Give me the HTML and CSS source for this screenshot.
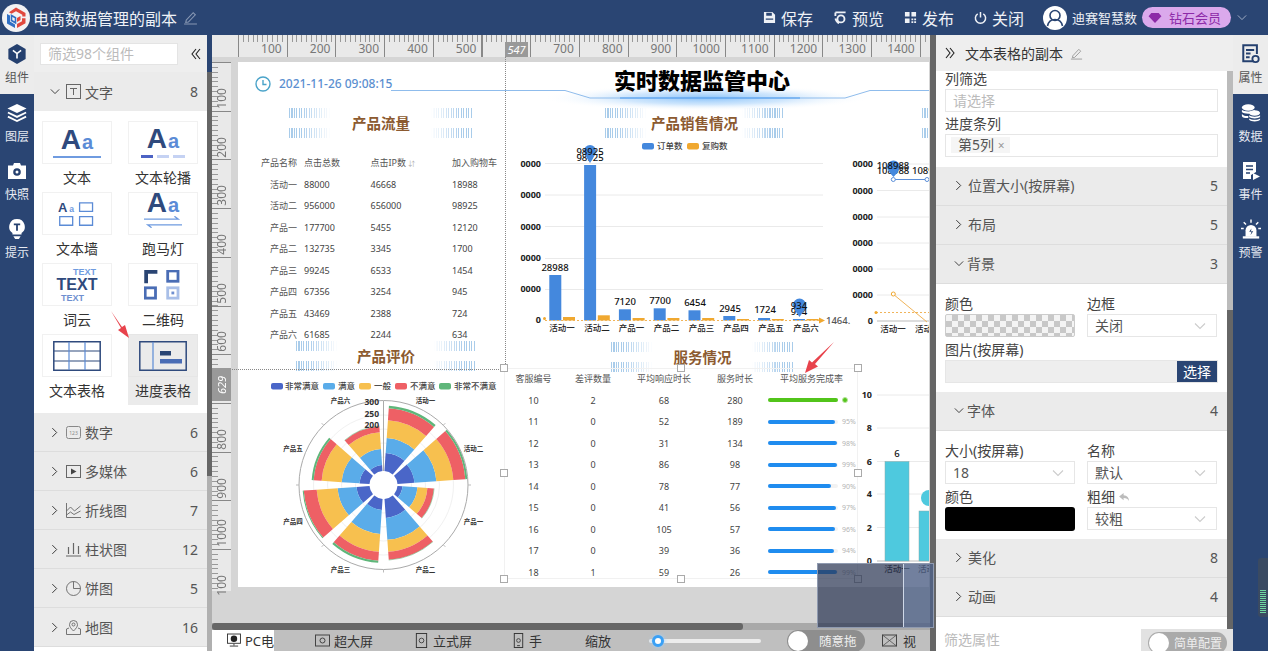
FILE: index.html
```html
<!DOCTYPE html>
<html lang="zh-CN">
<head>
<meta charset="UTF-8">
<title>电商数据管理的副本</title>
<link rel="stylesheet" href="styles.css">
</head>
<body>

<svg class="defs" width="0" height="0">
    <symbol id="right" viewBox="0 0 8 12"><polyline points="1.5,1 6.5,6 1.5,11" fill="none" stroke="currentColor" stroke-width="1.1"/></symbol>
    <symbol id="down" viewBox="0 0 12 8"><polyline points="1,1.5 6,6.5 11,1.5" fill="none" stroke="currentColor" stroke-width="1.1"/></symbol>
    <symbol id="pen" viewBox="0 0 14 14"><path d="M3 9.5 9.5 2.5l2 2L5 11.2l-2.4.4zM1 13h12" fill="none" stroke="currentColor" stroke-width="1"/></symbol>
    <symbol id="fold-l" viewBox="0 0 10 12"><path d="M5 1 1 6l4 5M9 1 5 6l4 5" fill="none" stroke="currentColor" stroke-width="1.1"/></symbol>
    <symbol id="fold-r" viewBox="0 0 10 12"><path d="M1 1l4 5-4 5M5 1l4 5-4 5" fill="none" stroke="currentColor" stroke-width="1.1"/></symbol>
</svg>

<header class="topbar">
    <svg class="logo" viewBox="0 0 28 28">
        <circle cx="14" cy="14" r="14" fill="#f2f2f4"/>
        <path d="M14 3.5 23.5 9v3.5h-3.2V10.8L14 7.2 9.5 9.8 7 8.3z" fill="#e0483e"/>
        <path d="M5 10v9.5l8 4.5v-3.6l-5-2.9v-6z" fill="#2f6fc4"/>
        <path d="M9.5 11.5l4 2.3v5l-4-2.3z" fill="none" stroke="#2f6fc4" stroke-width="1.6"/>
        <path d="M15 24l8.5-4.8v-5H20v3l-5 2.9zM15 14l3.5-2v4L15 18z" fill="#e0483e"/>
    </svg>
    <span class="app-name">电商数据管理的副本</span>
    <svg class="pen-top"><use href="#pen"/></svg>
    <div class="top-actions">
        <span class="act act-save">
            <svg viewBox="0 0 14 14"><path d="M1 1h9l3 3v9H1zM3.5 2v3h6V2zM3 8h8v1.5H3z" fill="#eef1f6" fill-rule="evenodd"/></svg>保存
        </span>
        <span class="act act-view">
            <svg viewBox="0 0 14 14"><path d="M1.5 1.5h11M1.5 1.5v4" fill="none" stroke="#eef1f6" stroke-width="2"/><circle cx="7.5" cy="8.5" r="3.8" fill="none" stroke="#eef1f6" stroke-width="2"/><path d="M1.5 8c1 3 2 4.5 4 5" fill="none" stroke="#eef1f6" stroke-width="2"/></svg>预览
        </span>
        <span class="act act-pub">
            <svg viewBox="0 0 14 14"><path d="M1 1h5v5H1zM8 1h5v5H8zM1 8h5v5H1zM8 8h2v2H8zM11 8h2v2h-2zM8 11h2v2H8zM11 11h2v2h-2z" fill="#eef1f6"/></svg>发布
        </span>
        <span class="act act-close">
            <svg viewBox="0 0 14 14"><path d="M4 3a5.5 5.5 0 1 0 6 0M7 1v6" fill="none" stroke="#eef1f6" stroke-width="1.6"/></svg>关闭
        </span>
    </div>
    <svg class="avatar" viewBox="0 0 24 24"><circle cx="12" cy="12" r="12" fill="#fff"/><circle cx="12" cy="9.5" r="5" fill="none" stroke="#2a4573" stroke-width="1.6"/><path d="M4.5 20c1-5 4-6.5 7.5-6.5s6.5 1.5 7.5 6.5" fill="none" stroke="#2a4573" stroke-width="1.6"/></svg>
    <span class="user-name">迪赛智慧数</span>
    <span class="vip">
        <svg viewBox="0 0 14 12"><path d="M3 1h8l3 3.5L7 12 0 4.5z" fill="#8d2aa8"/></svg>钻石会员
    </span>
    <svg class="top-chev"><use href="#down"/></svg>
</header>

<div class="main">
    <nav class="side-nav">
        <div class="nav-item active">
            <svg viewBox="0 0 20 22"><path d="M10 0l9.5 5.5v11L10 22 .5 16.5v-11z" fill="#25406f"/><path d="M5.5 7 10 10.5 14.5 7M10 10.5V16" fill="none" stroke="#fff" stroke-width="1.8"/></svg>
            <span>组件</span>
        </div>
        <div class="nav-item">
            <svg viewBox="0 0 22 20"><path d="M11 0l10.5 5L11 10 .5 5z" fill="#fff"/><path d="M1 9.5l10 4.8 10-4.8M1 14l10 4.8L21 14" fill="none" stroke="#fff" stroke-width="2"/></svg>
            <span>图层</span>
        </div>
        <div class="nav-item">
            <svg viewBox="0 0 20 17"><path d="M1 3h5l1-2.5h6L14 3h5v13.5H1z" fill="#fff"/><circle cx="10" cy="9.5" r="3.8" fill="#25406f"/><circle cx="10" cy="9.5" r="1.5" fill="#fff"/></svg>
            <span>快照</span>
        </div>
        <div class="nav-item">
            <svg viewBox="0 0 18 22"><path d="M9 0a8.5 8.5 0 0 1 5 15.4V17H4v-1.600A8.5 8.5 0 0 1 9 0z" fill="#fff"/><path d="M5 19h8l-2 3H7z" fill="#fff"/><path d="M5.5 6h7M9 6v7" stroke="#25406f" stroke-width="2"/></svg>
            <span>提示</span>
        </div>
    </nav>

    <aside class="comp-panel">
        <div class="comp-search">
            <div class="comp-input">筛选98个组件</div>
            <svg class="fold"><use href="#fold-l"/></svg>
        </div>
        <div class="comp-list">
            <div class="group open">
                <svg class="chev-d"><use href="#down"/></svg>
                <svg class="g-icon" viewBox="0 0 15 15"><rect x=".5" y=".5" width="14" height="14" fill="none" stroke="#666"/><path d="M4 4.5h7M7.5 4.5v6.5" stroke="#666"/></svg>
                <span class="g-name">文字</span><span class="g-count">8</span>
            </div>
            <div class="cards">
                <div class="card">
                    <div class="thumb"><div class="aa"><b>A</b><i>a</i></div><div class="rule"></div></div>
                    <span>文本</span>
                </div>
                <div class="card">
                    <div class="thumb"><div class="aa"><b>A</b><i>a</i></div><div class="dashes"><em></em><em></em><em></em></div></div>
                    <span>文本轮播</span>
                </div>
                <div class="card">
                    <div class="thumb">
                        <svg class="pic" viewBox="0 0 44 32"><text x="0" y="14" class="aa-a">A</text><text x="13" y="14" class="aa-b">a</text><path d="M25 3h15v10H25zM2 19h15v10H2zM25 19h15v10H25z" fill="none" stroke="#5b8bd6" stroke-width="1.5"/></svg>
                    </div>
                    <span>文本墙</span>
                </div>
                <div class="card">
                    <div class="thumb">
                        <div class="aa aa-high"><b>A</b><i>a</i></div>
                        <svg class="marq" viewBox="0 0 40 12"><path d="M0 3h36l-4-3M40 9H4l4 3" fill="none" stroke="#6f9be0" stroke-width="1.4"/></svg>
                    </div>
                    <span>跑马灯</span>
                </div>
                <div class="card">
                    <div class="thumb cloud"><span class="t1">TEXT</span><span class="t2">TEXT</span><span class="t3">TEXT</span></div>
                    <span>词云</span>
                </div>
                <div class="card">
                    <div class="thumb">
                        <svg class="pic" viewBox="0 0 40 32"><path d="M0 0h14v4H4v10H0z" fill="#2a4573"/><rect x="25" y="1" width="11" height="11" fill="none" stroke="#4a6db5" stroke-width="3"/><rect x="1" y="19" width="11" height="11" fill="none" stroke="#4a6db5" stroke-width="3"/><rect x="25" y="19" width="11" height="11" fill="none" stroke="#a9bfe8" stroke-width="3"/><rect x="29" y="23" width="3" height="3" fill="#6f8fd0"/></svg>
                    </div>
                    <span>二维码</span>
                </div>
                <div class="card">
                    <div class="thumb">
                        <svg class="pic wide" viewBox="0 0 48 30"><path d="M.8.8h46.4v28.4H.8z" fill="none" stroke="#2f4a7d" stroke-width="1.5"/><path d="M1 10h46M1 20h46" stroke="#2f4a7d" stroke-width="1.2"/><path d="M16 1v28M32 1v28" stroke="#5b8bd6" stroke-width="1.2"/></svg>
                    </div>
                    <span>文本表格</span>
                </div>
                <div class="card on">
                    <div class="thumb">
                        <svg class="pic wide" viewBox="0 0 48 30"><path d="M.8.8h46.4v28.4H.8z" fill="none" stroke="#2f4a7d" stroke-width="1.5"/><path d="M14 1v28" stroke="#5b8bd6" stroke-width="1.2"/><rect x="21" y="10" width="11" height="4.5" fill="#2a4573"/><rect x="21" y="18" width="22" height="4.5" fill="#4a6db5"/></svg>
                    </div>
                    <span>进度表格</span>
                </div>
            </div>
            <div class="group">
                <svg class="chev-r"><use href="#right"/></svg>
                <svg class="g-icon" viewBox="0 0 15 15"><rect x=".5" y="1.5" width="14" height="12" rx="2" fill="none" stroke="#888"/><text x="7.5" y="10" class="tiny" text-anchor="middle">123</text></svg>
                <span class="g-name">数字</span><span class="g-count">6</span>
            </div>
            <div class="group">
                <svg class="chev-r"><use href="#right"/></svg>
                <svg class="g-icon" viewBox="0 0 15 15"><rect x=".5" y="1.5" width="14" height="12" fill="none" stroke="#666"/><path d="M5 4.5l5.5 3-5.5 3z" fill="#444"/></svg>
                <span class="g-name">多媒体</span><span class="g-count">6</span>
            </div>
            <div class="group">
                <svg class="chev-r"><use href="#right"/></svg>
                <svg class="g-icon" viewBox="0 0 15 15"><path d="M.5 0v14.5H15M.5 8l4-4 4 4 6-5M.5 12l4-3 3.5 2.5 6.5-3.5" fill="none" stroke="#666" stroke-width=".9"/></svg>
                <span class="g-name">折线图</span><span class="g-count">7</span>
            </div>
            <div class="group">
                <svg class="chev-r"><use href="#right"/></svg>
                <svg class="g-icon" viewBox="0 0 15 15"><path d="M0 14h15M2.5 5v7M7.5 1v11M12.5 4v8" fill="none" stroke="#666" stroke-width="1.2"/></svg>
                <span class="g-name">柱状图</span><span class="g-count">12</span>
            </div>
            <div class="group">
                <svg class="chev-r"><use href="#right"/></svg>
                <svg class="g-icon" viewBox="0 0 15 15"><circle cx="7.5" cy="7.5" r="7" fill="none" stroke="#666" stroke-width=".9"/><path d="M7.5.5v7h7" fill="none" stroke="#666" stroke-width=".9"/></svg>
                <span class="g-name">饼图</span><span class="g-count">5</span>
            </div>
            <div class="group">
                <svg class="chev-r"><use href="#right"/></svg>
                <svg class="g-icon" viewBox="0 0 15 15"><path d="M7.5 11C5 8.5 3.5 6.8 3.5 4.5a4 4 0 0 1 8 0c0 2.300-1.500 4-4 6.500zM3 8l-2.500 1v5.500h14V9L12 8" fill="none" stroke="#666" stroke-width=".9"/><circle cx="7.5" cy="4.5" r="1.5" fill="none" stroke="#666" stroke-width=".9"/></svg>
                <span class="g-name">地图</span><span class="g-count">16</span>
            </div>
        </div>
    </aside>
    <div class="vbar"><div class="vbar-thumb"></div></div>

    <section class="center">
        <div class="ruler-h">
            <span>100</span><span>200</span><span>300</span><span>400</span><span>500</span><span class="blank"></span><span>700</span><span>800</span><span>900</span><span>1000</span><span>1100</span><span>1200</span><span>1300</span><span>1400</span>
        </div>
        <div class="work">
            <div class="ruler-v">
                <span>100</span><span>200</span><span>300</span><span>400</span><span>500</span><span>600</span><span>700</span><span>800</span><span>900</span><span>1000</span><span>100</span>
            </div>
            <div class="stage">
                <div class="canvas">
                    <svg class="board" viewBox="238 62 691 525">
                        <defs>
                            <radialGradient id="glow2">
                                <stop offset="0" stop-color="#8cc4fa"/>
                                <stop offset=".5" stop-color="#c3e0fc" stop-opacity=".8"/>
                                <stop offset="1" stop-color="#fff" stop-opacity="0"/>
                            </radialGradient>
                        </defs>

                        <!-- header line -->
                        <ellipse cx="706" cy="98" rx="165" ry="13" fill="url(#glow2)"/>
                        <path d="M391 90.5H565L590 98H845L870 90.5H929" fill="none" stroke="#8fbcec"/>
                        <path d="M620 98H800" stroke="#4d9cf0" stroke-width="1.2"/>
                        <circle cx="263" cy="84" r="7" fill="none" stroke="#4aa3c9" stroke-width="1.4"/>
                        <path d="M263 80v4.5h3.5" fill="none" stroke="#4aa3c9" stroke-width="1.4"/>

                        <!-- sales chart -->
                        <g class="grid">
                            <path d="M545 163.5H823M545 195H823M545 226.5H823M545 258.5H823M545 289.5H823"/>
                        </g>
                        <g class="tick" text-anchor="end">
                            <text x="541" y="166.5">0000</text><text x="541" y="197.5">0000</text><text x="541" y="229.5">0000</text><text x="541" y="260.5">0000</text><text x="541" y="292">0000</text><text x="541" y="323">0</text>
                        </g>
                        <rect x="642" y="143" width="12" height="6.5" rx="2" class="blue"/>
                        <text x="657" y="149" class="legend">订单数</text>
                        <rect x="687" y="143" width="12" height="6.5" rx="2" class="orange"/>
                        <text x="702" y="149" class="legend">复购数</text>
                        <g class="blue">
                            <rect x="549.3" y="275" width="12" height="45.5"/><rect x="584.1" y="165" width="12" height="155.5"/><rect x="618.9" y="309.3" width="12" height="11.2"/><rect x="653.7" y="308.3" width="12" height="12.2"/><rect x="688.5" y="310.3" width="12" height="10.2"/><rect x="723.3" y="316" width="12" height="4.5"/><rect x="758.1" y="318" width="12" height="2.5"/><rect x="792.9" y="319" width="12" height="1.5"/>
                        </g>
                        <g class="orange">
                            <rect x="563" y="317" width="12" height="3.5"/><rect x="597.8" y="315.3" width="12" height="5.2"/><rect x="632.6" y="318" width="12" height="2.5"/><rect x="667.4" y="318" width="12" height="2.5"/><rect x="702.2" y="318" width="12" height="2.5"/><rect x="737" y="319" width="12" height="1.5"/><rect x="771.8" y="319" width="12" height="1.5"/><rect x="806.6" y="319" width="12" height="1.5"/>
                        </g>
                        <path d="M545 320.5H820" class="mark"/>
                        <path d="M819 317.5l6 3-6 3z" class="orange"/>
                        <circle cx="544.5" cy="318.5" r="1.5" class="orange"/>
                        <text x="826" y="323.5" class="value gray">1464.</text>
                        <g class="value" text-anchor="middle">
                            <text x="555" y="270.5">28988</text><text x="590" y="160.5">98925</text><text x="625" y="305">7120</text><text x="660" y="304">7700</text><text x="695" y="305.5">6454</text><text x="730" y="311.5">2945</text><text x="765" y="313">1724</text><text x="799" y="315">934</text>
                        </g>
                        <path d="M584 151a6 6 0 0 1 12 0q0 3-6 12q-6-9-6-12z" class="blue"/>
                        <path d="M793 305a6.5 6.5 0 0 1 13 0q0 3-6.5 12q-6.5-9-6.5-12z" class="blue"/>
                        <g class="value" text-anchor="middle">
                            <text x="590" y="154.5">98925</text><text x="799" y="309">934</text>
                        </g>
                        <g class="xlabel" text-anchor="middle">
                            <text x="562" y="331">活动一</text><text x="597" y="331">活动二</text><text x="631.5" y="331">产品一</text><text x="666.5" y="331">产品二</text><text x="701.5" y="331">产品三</text><text x="736" y="331">产品四</text><text x="771" y="331">产品五</text><text x="806" y="331">产品六</text>
                        </g>

                        <!-- line chart, cut by the canvas -->
                        <g class="grid">
                            <path d="M877 164H929M877 190.5H929M877 217H929M877 243H929M877 269H929M877 295H929"/>
                        </g>
                        <path d="M877 321H929" stroke="#bbb"/>
                        <g class="tick" text-anchor="end">
                            <text x="873" y="167">0000</text><text x="873" y="193.5">0000</text><text x="873" y="220">0000</text><text x="873" y="246">0000</text><text x="873" y="272">0000</text><text x="873" y="298">0000</text><text x="873" y="324">0</text>
                        </g>
                        <path d="M876 312.5H929" class="mark"/>
                        <circle cx="876" cy="312.5" r="1.5" class="orange"/>
                        <path d="M893 179.5H927" stroke="#5b8fd9" fill="none"/>
                        <circle cx="893.3" cy="179.5" r="2" class="dot-b"/><circle cx="927" cy="179.5" r="2" class="dot-b"/>
                        <path d="M893 294L927 322" stroke="#f0b45a" fill="none"/>
                        <circle cx="893.3" cy="294" r="2" class="dot-o"/>
                        <g class="value" text-anchor="middle"><text x="893" y="173.5">108988</text></g>
                        <text x="912" y="173.5" class="value">1089</text>
                        <path d="M887 167a6.5 6.5 0 0 1 13 0q0 3-6.5 10q-6.5-7-6.5-10z" class="blue"/>
                        <text x="893" y="169" class="value" text-anchor="middle">108988</text>
                        <text x="893" y="332" class="xlabel" text-anchor="middle">活动一</text>
                        <text x="915" y="332" class="xlabel">活动</text>

                        <!-- rose chart -->
                        <rect x="271" y="383" width="12" height="6.5" rx="2" class="c1"/><text x="285" y="389" class="legend">非常满意</text>
                        <rect x="323" y="383" width="12" height="6.5" rx="2" class="c2"/><text x="338" y="389" class="legend">满意</text>
                        <rect x="359" y="383" width="12" height="6.5" rx="2" class="c3"/><text x="374" y="389" class="legend">一般</text>
                        <rect x="395" y="383" width="12" height="6.5" rx="2" class="c4"/><text x="410" y="389" class="legend">不满意</text>
                        <rect x="439" y="383" width="12" height="6.5" rx="2" class="c5"/><text x="454" y="389" class="legend">非常不满意</text>
                        <g transform="translate(383.5 485)">
                            <g class="rings">
                                <circle r="28"/><circle r="42"/><circle r="56"/><circle r="70"/>
                            </g>
                            <g transform="rotate(-90)" class="rose">
                                <circle r="23" stroke-width="18" pathLength="360" class="s1"/><circle r="39.5" stroke-width="15" pathLength="360" class="s2"/><circle r="56" stroke-width="18" pathLength="360" class="s3"/><circle r="71" stroke-width="12" pathLength="360" class="s4"/><circle r="78.25" stroke-width="2.5" pathLength="360" class="s5"/>
                            </g>
                            <g transform="rotate(-45)" class="rose">
                                <circle r="22.5" stroke-width="17" pathLength="360" class="s1"/><circle r="42" stroke-width="22" pathLength="360" class="s2"/><circle r="61.5" stroke-width="17" pathLength="360" class="s3"/><circle r="76" stroke-width="12" pathLength="360" class="s4"/><circle r="83" stroke-width="2" pathLength="360" class="s5"/>
                            </g>
                            <g class="rose">
                                <circle r="16.5" stroke-width="5" pathLength="360" class="s1"/><circle r="26.5" stroke-width="15" pathLength="360" class="s2"/><circle r="39" stroke-width="10" pathLength="360" class="s3"/><circle r="47.25" stroke-width="6.5" pathLength="360" class="s4"/><circle r="50.75" stroke-width=".5" pathLength="360" class="s5"/>
                            </g>
                            <g transform="rotate(45)" class="rose">
                                <circle r="23.5" stroke-width="19" pathLength="360" class="s1"/><circle r="44" stroke-width="22" pathLength="360" class="s2"/><circle r="61" stroke-width="12" pathLength="360" class="s3"/><circle r="71" stroke-width="8" pathLength="360" class="s4"/><circle r="75.25" stroke-width=".5" pathLength="360" class="s5"/>
                            </g>
                            <g transform="rotate(90)" class="rose">
                                <circle r="19.5" stroke-width="11" pathLength="360" class="s1"/><circle r="37" stroke-width="24" pathLength="360" class="s2"/><circle r="58" stroke-width="18" pathLength="360" class="s3"/><circle r="71.5" stroke-width="9" pathLength="360" class="s4"/><circle r="77" stroke-width="2" pathLength="360" class="s5"/>
                            </g>
                            <g transform="rotate(135)" class="rose">
                                <circle r="20.5" stroke-width="13" pathLength="360" class="s1"/><circle r="36.5" stroke-width="19" pathLength="360" class="s2"/><circle r="56.5" stroke-width="21" pathLength="360" class="s3"/><circle r="73.5" stroke-width="13" pathLength="360" class="s4"/><circle r="80.5" stroke-width="1" pathLength="360" class="s5"/>
                            </g>
                            <g transform="rotate(180)" class="rose">
                                <circle r="19" stroke-width="10" pathLength="360" class="s1"/><circle r="33" stroke-width="18" pathLength="360" class="s2"/><circle r="52" stroke-width="20" pathLength="360" class="s3"/><circle r="66" stroke-width="8" pathLength="360" class="s4"/><circle r="71" stroke-width="2" pathLength="360" class="s5"/>
                            </g>
                            <g transform="rotate(225)" class="rose">
                                <circle r="17" stroke-width="6" pathLength="360" class="s1"/><circle r="28" stroke-width="16" pathLength="360" class="s2"/><circle r="44.5" stroke-width="17" pathLength="360" class="s3"/><circle r="56" stroke-width="6" pathLength="360" class="s4"/><circle r="59.25" stroke-width=".5" pathLength="360" class="s5"/>
                            </g>
                            <circle r="84.5" class="rim"/>
                            <path d="M0 -84V-14" stroke="#aaa"/>
                            <path d="M84.5 0h3M-84.5 0h-3M0 84.5v3M59.8 -59.8l2 -2M-59.8 -59.8l-2 -2M59.8 59.8l2 2M-59.8 59.8l-2 2" stroke="#bbb"/>
                        </g>
                        <g class="tick small-tick" text-anchor="end">
                            <text x="379" y="405">300</text><text x="379" y="417">250</text><text x="379" y="428">200</text>
                        </g>
                        <g class="petal" text-anchor="middle">
                            <text x="340.5" y="403">产品六</text><text x="425.5" y="403">活动一</text><text x="473.5" y="451">活动二</text><text x="473.5" y="524">产品一</text><text x="425.5" y="572">产品二</text><text x="340.5" y="572">产品三</text><text x="293" y="524">产品四</text><text x="293" y="451">产品五</text>
                        </g>

                        <!-- bar chart, cut by the canvas -->
                        <g class="grid">
                            <path d="M877 395H929M877 428H929M877 461.5H929M877 494H929M877 527.5H929"/>
                        </g>
                        <g class="tick" text-anchor="end">
                            <text x="872" y="398">10</text><text x="872" y="431">8</text><text x="872" y="464.5">6</text><text x="872" y="497">4</text><text x="872" y="530.5">2</text><text x="872" y="563.5">0</text>
                        </g>
                        <path d="M877 561H929" stroke="#bbb"/>
                        <rect x="885" y="461.5" width="24" height="99.5" class="cyan"/>
                        <rect x="919" y="511" width="12" height="50" class="cyan"/>
                        <circle cx="929" cy="498" r="8" fill="#4ec9de"/>
                        <text x="897" y="457" class="value" text-anchor="middle">6</text>
                        <text x="897" y="572" class="xlabel" text-anchor="middle">活动一</text>
                        <text x="918" y="572" class="xlabel">活动</text>
                    </svg>

                    <div class="date">2021-11-26 09:08:15</div>
                    <div class="big-title">实时数据监管中心</div>

                    <div class="sec sec-flow"><div class="strips l"><i></i><i></i></div><b>产品流量</b><div class="strips r"><i></i><i></i></div></div>
                    <div class="sec sec-sale"><div class="strips l"><i></i><i></i></div><b>产品销售情况</b><div class="strips r"><i></i><i></i></div></div>
                    <div class="sec sec-rate"><div class="strips l"><i></i><i></i></div><b>产品评价</b><div class="strips r"><i></i><i></i></div></div>
                    <div class="sec sec-serv"><div class="strips l"><i></i><i></i></div><b>服务情况</b><div class="strips r"><i></i><i></i></div></div>
                    <div class="sec sec-edge"><div class="strips l"><i></i><i></i></div></div>

                    <table class="flow">
                        <tr><th>产品名称</th><th>点击总数</th><th>点击IP数 <small>⇵</small></th><th>加入购物车</th></tr>
                        <tr><td>活动一</td><td>88000</td><td>46668</td><td>18988</td></tr>
                        <tr><td>活动二</td><td>956000</td><td>656000</td><td>98925</td></tr>
                        <tr><td>产品一</td><td>177700</td><td>5455</td><td>12120</td></tr>
                        <tr><td>产品二</td><td>132735</td><td>3345</td><td>1700</td></tr>
                        <tr><td>产品三</td><td>99245</td><td>6533</td><td>1454</td></tr>
                        <tr><td>产品四</td><td>67356</td><td>3254</td><td>945</td></tr>
                        <tr><td>产品五</td><td>43469</td><td>2388</td><td>724</td></tr>
                        <tr><td>产品六</td><td>61685</td><td>2244</td><td>634</td></tr>
                    </table>

                    <table class="serv">
                        <tr><th>客服编号</th><th>差评数量</th><th>平均响应时长</th><th>服务时长</th><th>平均服务完成率</th></tr>
                        <tr><td>10</td><td>2</td><td>68</td><td>280</td><td><div class="prog ok"><div class="track"><div class="fill" style="width:100%"></div></div><span class="tickmark"></span></div></td></tr>
                        <tr><td>11</td><td>0</td><td>52</td><td>189</td><td><div class="prog"><div class="track"><div class="fill" style="width:95%"></div></div><span>95%</span></div></td></tr>
                        <tr><td>12</td><td>0</td><td>31</td><td>134</td><td><div class="prog"><div class="track"><div class="fill" style="width:98%"></div></div><span>98%</span></div></td></tr>
                        <tr><td>13</td><td>0</td><td>86</td><td>98</td><td><div class="prog"><div class="track"><div class="fill" style="width:99%"></div></div><span>99%</span></div></td></tr>
                        <tr><td>14</td><td>0</td><td>78</td><td>77</td><td><div class="prog"><div class="track"><div class="fill" style="width:90%"></div></div><span>90%</span></div></td></tr>
                        <tr><td>15</td><td>0</td><td>41</td><td>56</td><td><div class="prog"><div class="track"><div class="fill" style="width:97%"></div></div><span>97%</span></div></td></tr>
                        <tr><td>16</td><td>0</td><td>105</td><td>57</td><td><div class="prog"><div class="track"><div class="fill" style="width:96%"></div></div><span>96%</span></div></td></tr>
                        <tr><td>17</td><td>0</td><td>39</td><td>36</td><td><div class="prog"><div class="track"><div class="fill" style="width:94%"></div></div><span>94%</span></div></td></tr>
                        <tr><td>18</td><td>1</td><td>59</td><td>26</td><td><div class="prog"><div class="track"><div class="fill" style="width:99%"></div></div><span>99%</span></div></td></tr>
                    </table>
                </div>
            </div>
        </div>
        <div class="hbar"><div class="hbar-thumb"></div></div>
        <div class="bottom">
            <div class="tab active">
                <svg viewBox="0 0 15 15"><rect x=".5" y=".5" width="14" height="10" fill="none" stroke="#333"/><circle cx="7.5" cy="5.5" r="3.5" fill="#222"/><path d="M3 13.5h9M7.5 11v2" stroke="#333"/></svg>PC电
            </div>
            <div class="tab t-big">
                <svg viewBox="0 0 15 12"><rect x=".5" y=".5" width="14" height="11" fill="none" stroke="#444"/><circle cx="7.5" cy="6" r="2.5" fill="none" stroke="#444"/></svg>超大屏
            </div>
            <div class="tab t-stand">
                <svg viewBox="0 0 12 16"><rect x=".5" y=".5" width="11" height="15" fill="none" stroke="#333"/><circle cx="6" cy="8" r="2.5" fill="none" stroke="#444"/></svg>立式屏
            </div>
            <div class="tab t-hand">
                <svg viewBox="0 0 10 16"><rect x=".5" y=".5" width="9" height="15" fill="none" stroke="#333"/><circle cx="5" cy="8" r="2" fill="none" stroke="#444"/><path d="M3.5 13.5h3" stroke="#333"/></svg>手
            </div>
            <span class="zoom-label">缩放</span>
            <div class="slider"><span class="knob"></span></div>
            <div class="switch"><span class="sw-knob"></span>随意拖</div>
            <div class="tab t-view">
                <svg viewBox="0 0 15 12"><rect x=".5" y=".5" width="14" height="11" fill="none" stroke="#444"/><path d="M.5.5l14 11M14.5.5l-14 11" stroke="#444" stroke-width=".7"/></svg>视
            </div>
        </div>

        <span class="select-box"></span>
        <span class="guide-v"></span><span class="guide-h"></span>
        <span class="ruler-tag-h">547</span><span class="ruler-tag-v">629</span>
        <span class="hd h1"></span><span class="hd h2"></span><span class="hd h3"></span><span class="hd h4"></span><span class="hd h5"></span><span class="hd h6"></span><span class="hd h7"></span><span class="hd h8"></span>
        <div class="minimap"><div class="viewport"></div></div>
    </section>

    <aside class="prop-panel">
        <div class="prop-head">
            <svg class="fold"><use href="#fold-r"/></svg><span class="prop-title">文本表格的副本</span>
            <svg class="pen-prop"><use href="#pen"/></svg>
        </div>
        <div class="prop-body">
            <div class="prop-scroll"><div class="prop-thumb"></div></div>
            <div class="block first">
                <label>列筛选</label>
                <div class="field ph">请选择</div>
                <label>进度条列</label>
                <div class="field"><span class="tag">第5列 <em>×</em></span></div>
            </div>
            <div class="row"><svg class="chev-r"><use href="#right"/></svg><span>位置大小(按屏幕)</span><b>5</b></div>
            <div class="row"><svg class="chev-r"><use href="#right"/></svg><span>布局</span><b>5</b></div>
            <div class="row"><svg class="chev-d"><use href="#down"/></svg><span>背景</span><b>3</b></div>
            <div class="block pads">
                <div class="pair">
                    <div><label>颜色</label><div class="checker"></div></div>
                    <div><label>边框</label><div class="field sel">关闭<svg><use href="#down"/></svg></div></div>
                </div>
                <label>图片(按屏幕)</label>
                <div class="file"><span>选择</span></div>
            </div>
            <div class="row"><svg class="chev-d"><use href="#down"/></svg><span>字体</span><b>4</b></div>
            <div class="block pads">
                <div class="pair">
                    <div><label>大小(按屏幕)</label><div class="field sel">18<svg><use href="#down"/></svg></div></div>
                    <div><label>名称</label><div class="field sel">默认<svg><use href="#down"/></svg></div></div>
                </div>
                <div class="pair">
                    <div><label>颜色</label><div class="swatch"></div></div>
                    <div><label>粗细 <svg class="undo" viewBox="0 0 12 10"><path d="M5 0 0 4l5 4V5.5c3 0 5 1 6 3.500 0-4-2-6-6-6.500z" fill="#bbb"/></svg></label><div class="field sel">较粗<svg><use href="#down"/></svg></div></div>
                </div>
            </div>
            <div class="row"><svg class="chev-r"><use href="#right"/></svg><span>美化</span><b>8</b></div>
            <div class="row"><svg class="chev-r"><use href="#right"/></svg><span>动画</span><b>4</b></div>
        </div>
        <div class="prop-foot">
            <div class="prop-filter">筛选属性</div>
            <div class="switch small"><span class="sw-knob"></span>简单配置</div>
        </div>
    </aside>

    <nav class="side-nav right">
        <div class="nav-item active">
            <svg viewBox="0 0 20 22"><path d="M13 19H1.5V1.5h15V11M4.5 6.5h9M4.5 10.5h5M4.5 14.5h4" fill="none" stroke="#25406f" stroke-width="2.2"/><circle cx="15" cy="16.5" r="3.5" fill="none" stroke="#25406f" stroke-width="2"/></svg>
            <span>属性</span>
        </div>
        <div class="nav-item">
            <svg viewBox="0 0 22 20"><ellipse cx="8" cy="4" rx="7" ry="3.5" fill="#fff"/><path d="M1 6.5c2 2.5 12 2.5 14 0V9c-2 2.5-12 2.5-14 0zM1 11c2 2.5 6 2.5 7 2.2v2.300c-2 .3-6 0-7-2z" fill="#fff"/><ellipse cx="15" cy="10" rx="6" ry="3" fill="#fff"/><path d="M9 12.5c2 2 10 2 12 0v2c-2 2-10 2-12 0zM9 16c2 2 10 2 12 0v1.500c-2 2.500-10 2.500-12 0z" fill="#fff"/></svg>
            <span>数据</span>
        </div>
        <div class="nav-item">
            <svg viewBox="0 0 20 20"><path d="M2 1h13v10l-5 3v4H2z" fill="#fff"/><path d="M5 5h7M5 8.5h7M5 12h4" stroke="#25406f" stroke-width="1.5"/><path d="M12 12l7 3.5-7 3.5z" fill="#fff"/></svg>
            <span>事件</span>
        </div>
        <div class="nav-item">
            <svg viewBox="0 0 22 21"><path d="M5 19V12a6 6 0 0 1 12 0v7z" fill="#fff"/><rect x="2" y="18.5" width="18" height="2.5" fill="#fff"/><path d="M11 0v3.5M3 3l2.5 2.5M19 3l-2.5 2.5M0 10h3M19 10h3" stroke="#fff" stroke-width="1.6"/><path d="M11.5 10l-2.500 3.500h2.500L10.500 17l3-4h-2.500z" fill="#25406f"/></svg>
            <span>预警</span>
        </div>
    </nav>
</div>

<div class="meter"><i></i></div>

<svg class="arrow a1" viewBox="0 0 20 28"><path d="M0 0 11 16l3-2 4 13-11-8 3-2z" fill="#e8434c"/></svg>
<svg class="arrow a2" viewBox="0 0 30 32"><path d="M30 0 11 22l3 2.500L1 31l4-13 3 2.500z" fill="#e8434c"/></svg>

</body>
</html>
```

FILE: styles.css
```css
* { box-sizing:border-box; }
html, body { margin:0; height:100%; overflow:hidden; }
body { width:1268px; height:651px; position:relative; font-family:"Noto Sans","Noto Sans CJK SC",sans-serif; font-size:14px; color:#444; background:#2a4573; }
.defs { position:absolute; }

/* top bar */
.topbar { height:35px; background:#2a4573; display:flex; align-items:center; color:#eef1f6; padding-left:2px; }
.logo { width:28px; height:28px; margin-top:1px; }
.app-name { font-size:16px; margin-left:3px; }
.pen-top { width:15px; height:15px; margin-left:6px; color:#8898b4; }
.top-actions { display:flex; margin-left:auto; font-size:16px; }
.act { display:flex; align-items:center; }
.act svg { width:13px; height:13px; margin-right:5px; }
.act-save { margin-right:21px; }
.act-view { margin-right:20px; }
.act-pub { margin-right:20px; }
.avatar { width:24px; height:24px; margin-left:19px; }
.user-name { font-size:13px; margin-left:5px; }
.vip { width:89px; height:21px; margin-left:5px; border-radius:11px; background:#dba9ec; color:#8d2aa8; font-size:13px; display:flex; align-items:center; padding-left:6px; }
.vip svg { width:14px; height:11px; margin-right:7px; }
.top-chev { width:10px; height:7px; margin:0 21px 0 6px; color:#aab6cc; }

.main { height:616px; display:flex; }

/* side navs */
.side-nav { width:34px; flex:none; background:#2a4573; color:#e6eaf2; font-size:12px; text-align:center; }
.side-nav.right { width:35px; }
.nav-item { height:58px; display:flex; flex-direction:column; align-items:center; padding-top:9px; line-height:18px; }
.nav-item svg { width:20px; height:20px; margin-bottom:5px; flex:none; }
.nav-item.active { background:#ececec; color:#555; height:59px; }

/* component panel */
.comp-panel { width:173px; flex:none; background:#fff; }
.comp-search { height:37px; background:#eee; display:flex; align-items:center; padding:0 6px; }
.comp-input { width:141px; height:22px; background:#fff; border:1px solid #e4e4e4; color:#bbb; line-height:19px; padding-left:7px; }
.fold { width:10px; height:12px; color:#222; flex:none; }
.comp-search .fold { margin-left:13px; }
.group { height:39px; background:#ebebeb; border-bottom:1px solid #ddd; display:flex; align-items:center; padding:0 9px 0 17px; color:#555; }
.group .chev-d { width:10px; height:7px; margin-left:-1px; margin-right:6px; color:#333; }
.group .chev-r { width:7px; height:11px; margin-right:8px; color:#333; }
.group.open { border-bottom:0; }
.g-icon { width:15px; height:15px; }
.g-name { margin-left:4px; }
.g-count { margin-left:auto; }
.tiny { font-size:5px; fill:#888; }
.cards { height:302px; padding:10px 9px 0 8px; display:grid; grid-template-columns:70px 70px; column-gap:16px; grid-auto-rows:71px; }
.card { text-align:center; line-height:28px; color:#333; }
.thumb { height:43px; border:1px solid #f1f1f1; display:flex; flex-direction:column; align-items:center; justify-content:center; position:relative; overflow:hidden; }
.card.on { background:#ebebeb; height:71px; }
.card.on .thumb { border-color:#e6e6e6; background:#ebebeb; }
.aa { line-height:24px; height:25px; font-family:"Liberation Sans",sans-serif; }
.aa b { font-size:28px; color:#2f4a7d; }
.aa i { font-size:20px; color:#5b8bd6; font-style:normal; font-weight:700; margin-left:1px; }
.aa-high { margin-top:-8px; }
.rule { width:48px; height:2px; background:#6f9be0; margin-top:3px; }
.dashes { display:flex; gap:4px; margin-top:3px; }
.dashes em { width:12px; height:2.5px; background:#c5d2f3; }
.dashes em:first-child { background:#4d63c4; }
.pic { width:38px; height:30px; }
.pic.wide { width:48px; height:30px; }
.aa-a { font:700 15px "Liberation Sans",sans-serif; fill:#2f4a7d; }
.aa-b { font:700 10px "Liberation Sans",sans-serif; fill:#6f9be0; }
.marq { width:38px; height:12px; }
.cloud { font-family:"Liberation Sans",sans-serif; font-weight:700; line-height:12px; }
.cloud .t1 { font-size:9px; color:#6f9be0; align-self:flex-end; margin-right:15px; }
.cloud .t2 { font-size:16px; color:#2f4a7d; line-height:14px; }
.cloud .t3 { font-size:9px; color:#6f8fd0; align-self:flex-start; margin-left:18px; }

.vbar { width:5px; flex:none; background:#b0b0b0; margin-top:37px; }
.vbar-thumb { height:404px; background:#666; }

/* center */
.center { width:718px; flex:none; display:flex; flex-direction:column; background:#d5d5d5; position:relative; }
.ruler-h { height:22px; display:flex; font-size:12px; line-height:15px; color:#777; padding:6px 0 0 26px; background-color:#e9e9e9;
    background-image:repeating-linear-gradient(90deg,#888 0 1px,transparent 1px 48.7px),repeating-linear-gradient(90deg,#999 0 1px,transparent 1px 4.87px);
    background-position:26px 0; background-size:100% 100%,100% 7px; background-repeat:no-repeat; }
.ruler-h span { width:48.7px; flex:none; text-align:right; padding-right:5px; }
.work { flex:1; display:flex; padding-top:5px; min-height:0; }
.ruler-v { width:19px; flex:none; height:529px; background-color:#e9e9e9; font-size:12px; color:#777; display:flex; flex-direction:column;
    background-image:repeating-linear-gradient(180deg,#888 0 1px,transparent 1px 48.7px),repeating-linear-gradient(180deg,#999 0 1px,transparent 1px 4.87px);
    background-size:100% 100%,6px 100%; background-repeat:no-repeat; }
.ruler-v span { height:48.7px; flex:none; writing-mode:vertical-rl; transform:rotate(180deg); line-height:19px; padding-top:2px; text-align:left; }
.stage { flex:1; padding-left:7px; min-width:0; }
.canvas { width:691px; height:525px; background:#fff; position:relative; overflow:hidden; }
.board { position:absolute; left:0; top:0; width:691px; height:525px; }

.hbar { height:7px; background:#a9a9a9; margin-top:-1px; }
.hbar-thumb { width:531px; height:7px; border-radius:3px; background:#666; }
.bottom { height:21px; background:#bfbfbf; display:flex; align-items:center; font-size:13px; color:#333; flex:none; }
.tab { display:flex; align-items:center; height:100%; }
.tab svg { width:15px; height:15px; margin-right:4px; }
.tab.active { background:#fff; width:62px; padding-left:15px; white-space:nowrap; }
.t-big { margin-left:41px; }
.t-stand { margin-left:42px; }
.t-hand { margin-left:41px; }
.t-stand svg, .t-hand svg { width:13px; margin-right:5px; }
.t-hand svg { width:11px; }
.zoom-label { margin-left:43px; }
.slider { width:112px; height:4px; margin-left:38px; border-radius:2px; background:#ececec; position:relative; }
.knob { position:absolute; left:3px; top:-4px; width:12px; height:12px; border-radius:50%; background:#fff; border:3px solid #3aa0f5; box-shadow:0 0 4px #9fd0fa; }
.switch { width:78px; height:22px; margin-left:26px; border-radius:11px; background:#8e8e8e; color:#eee; font-size:12.5px; display:flex; align-items:center; padding-left:1px; gap:11px; }
.sw-knob { width:20px; height:20px; border-radius:50%; background:#fff; }
.t-view { margin-left:17px; }
.t-view svg { margin-right:6px; }

/* canvas contents */
.date { position:absolute; left:41px; top:13px; font-size:12px; line-height:18px; font-weight:500; color:#5b8fd0; }
.big-title { position:absolute; left:376px; top:2px; font-size:22px; line-height:33px; font-weight:900; color:#000; white-space:nowrap; }
.sec { position:absolute; display:flex; justify-content:space-between; align-items:center; height:31px; }
.sec b { font-size:14.5px; color:#8c5a30; white-space:nowrap; }
.strips { width:42px; display:flex; flex-direction:column; gap:10px; opacity:.75; }
.strips i { height:10px; background:repeating-linear-gradient(90deg,#8dbbe4 0 1px,transparent 1px 2.5px); }
.strips.l i { -webkit-mask-image:linear-gradient(90deg,#000 30%,transparent); mask-image:linear-gradient(90deg,#000 30%,transparent); }
.strips.r i { -webkit-mask-image:linear-gradient(270deg,#000 30%,transparent); mask-image:linear-gradient(270deg,#000 30%,transparent); }
.sec-flow { left:51px; top:45px; width:184px; }
.sec-sale { left:367px; top:45px; width:179px; }
.sec-rate { left:58px; top:278px; width:180px; }
.sec-serv { left:373px; top:279px; width:183px; }
.sec-edge { left:684px; top:45px; }
table { position:absolute; border-collapse:collapse; table-layout:fixed; font-size:9px; color:#444; }
th { font-weight:400; color:#555; height:21.5px; padding:0; }
td { height:21.5px; padding:0; }
.flow { left:20px; top:90px; width:240px; }
.flow th, .flow td { text-align:left; white-space:nowrap; }
.flow small { font-size:7px; color:#aaa; }
.flow th:nth-child(1), .flow td:nth-child(1) { width:46px; padding-right:7px; text-align:right; }
.flow th:nth-child(2) { width:66.5px; }
.flow th:nth-child(3) { width:81.5px; }
.flow td:nth-child(1) { color:#555; }
.serv { left:268px; top:306px; width:355px; }
.serv th, .serv td { text-align:center; white-space:nowrap; }
.serv th:nth-child(1) { width:55px; }
.serv th:nth-child(2) { width:64px; }
.serv th:nth-child(3) { width:78px; }
.serv th:nth-child(4) { width:64px; }
.serv th:nth-child(5) { padding-right:5px; }
.prog { display:flex; align-items:center; padding-left:2px; }
.track { width:70px; height:4px; margin-left:-1px; margin-right:4px; border-radius:2px; background:#f2f2f2; }
.fill { height:4px; border-radius:2px; background:#1f8cef; }
.prog span { font-size:7px; color:#b4b4b4; }
.prog.ok .fill { background:#52c41a; }
.tickmark { width:6px; height:6px; border-radius:50%; background:#52c41a; border:1px solid #b6e39b; }

/* svg chart styles */
.grid path { stroke:#eaeaea; fill:none; }
.tick { font-size:9px; font-weight:700; fill:#222; }
.small-tick { font-size:8.5px; fill:#333; }
.legend { font-size:8.5px; fill:#444; font-weight:500; }
.value { font-size:9.5px; font-weight:500; fill:#111; }
.value.gray { fill:#555; }
.xlabel { font-size:8.5px; font-weight:500; fill:#222; }
.petal { font-size:6.5px; font-weight:700; fill:#333; }
.blue { fill:#4488dd; }
.orange { fill:#f0a830; }
.cyan { fill:#4ec9de; stroke:#8aa; stroke-width:.5; }
.mark { stroke:#f0b45a; stroke-dasharray:2 2; fill:none; }
.dot-b { fill:#fff; stroke:#5b8fd9; }
.dot-o { fill:#fff; stroke:#f0a830; }
.c1 { fill:#4a66c8; }
.c2 { fill:#5aace9; }
.c3 { fill:#f7c04f; }
.c4 { fill:#ee6065; }
.c5 { fill:#5fb67a; }
.rings circle { fill:none; stroke:#f1f1f1; }
.rose circle { fill:none; stroke-dasharray:37 323; stroke-dashoffset:-4; }
.s1 { stroke:#4a66c8; }
.s2 { stroke:#5aace9; }
.s3 { stroke:#f7c04f; }
.s4 { stroke:#ee6065; }
.s5 { stroke:#5fb67a; }
.rim { fill:none; stroke:#aaa; }

/* editor overlays */
.select-box { position:absolute; left:292px; top:333px; width:354px; height:211px; border:1px solid #f1f1f1; }
.guide-v { position:absolute; left:293px; top:7px; height:326px; border-left:1px dotted #888; }
.guide-h { position:absolute; left:0; top:334px; width:293px; border-top:1px dotted #888; }
.ruler-tag-h { position:absolute; left:293px; top:7px; width:23px; height:15px; background:#999; color:#fff; font-size:11px; line-height:15px; font-style:italic; text-align:center; }
.ruler-tag-v { position:absolute; left:0; top:333px; width:19px; height:33px; background:#999; color:#fff; font-size:11px; font-style:italic; line-height:19px; writing-mode:vertical-rl; transform:rotate(180deg); text-align:center; }
.hd { position:absolute; width:8px; height:8px; background:#fff; border:1px solid #aaa; }
.h1 { left:288px; top:329px; }
.h2 { left:465px; top:329px; }
.h3 { left:642px; top:329px; }
.h4 { left:288px; top:434px; }
.h5 { left:642px; top:434px; }
.h6 { left:288px; top:540px; }
.h7 { left:465px; top:540px; }
.h8 { left:642px; top:540px; }
.minimap { position:absolute; left:605px; top:528px; width:117px; height:65px; background:rgba(45,55,85,.72); border:1px solid #8f9ab0; }
.viewport { position:absolute; right:0; top:0; width:30px; height:100%; background:rgba(140,170,220,.3); border-left:1px solid #cfd8e8; }

/* right panel */
.prop-panel { width:303px; flex:none; background:#fff; border-left:6px solid #666; display:flex; flex-direction:column; }
.prop-head { height:36px; background:#eee; display:flex; align-items:center; padding-left:9px; color:#333; }
.prop-title { margin-left:10px; }
.pen-prop { width:13px; height:13px; margin-left:7px; color:#999; }
.prop-body { flex:1; position:relative; padding-right:6px; min-height:0; }
.prop-scroll { position:absolute; right:0; top:0; width:6px; height:100%; background:#bbb; }
.prop-thumb { position:absolute; left:0; right:0; top:239px; bottom:0; background:#666; }
.block { background:#fff; padding:0 9px; }
.block label { display:block; line-height:20px; color:#444; }
.first { height:96px; }
.first label { line-height:16px; padding-bottom:2px; }
.field { height:23px; border:1px solid #e6e6e6; padding:0 0 0 7px; line-height:21px; color:#555; margin-bottom:3px; }
.ph { color:#bbb; margin-bottom:4px; }
.tag { display:inline-block; margin-left:-2px; padding:0 5px 0 7px; height:16px; line-height:16px; background:#f5f5f5; color:#555; margin-top:2px; vertical-align:top; }
.tag em { font-style:normal; font-size:12px; color:#999; }
.row { height:39px; background:#ebebeb; border-bottom:1px solid #ddd; display:flex; align-items:center; padding:0 9px 2px 19px; color:#555; }
.row .chev-r { width:7px; height:11px; margin-right:6px; color:#333; }
.row .chev-d { width:10px; height:7px; margin-right:3px; margin-left:-1px; color:#333; }
.row b { font-weight:400; margin-left:auto; }
.pair { display:grid; grid-template-columns:130px 130px; column-gap:12px; }
.pads { height:108px; padding-top:10px; }
.checker { height:23px; border-radius:2px; border:1px solid #ccc; background:repeating-conic-gradient(#c8c8c8 0 25%,#f4f4f4 0 50%) 0 0/12px 12px; margin-bottom:3px; }
.sel { display:flex; justify-content:space-between; align-items:center; padding-right:9px; }
.sel svg { width:14px; height:8px; color:#ccc; }
.file { height:23px; background:#eee; border:1px solid #e6e6e6; display:flex; justify-content:flex-end; }
.file span { width:40px; background:#2a4573; color:#fff; text-align:center; line-height:21px; }
.swatch { height:24px; border-radius:3px; background:#000; }
.undo { width:11px; height:9px; }
.prop-foot { height:22px; flex:none; display:flex; align-items:center; background:#e2e2e2; position:relative; }
.prop-filter { width:205px; height:22px; color:#bbb; line-height:22px; padding-left:8px; background:#fff; }
.switch.small { position:absolute; left:212px; top:3px; width:79px; margin:0; background:#aaa; gap:5px; font-size:12px; }

.meter { position:absolute; left:1258px; top:558px; width:10px; height:59px; border-radius:3px 0 0 3px; background:#3a4a62; padding:32px 2px 3px; }
.meter i { display:block; height:100%; background:repeating-linear-gradient(180deg,#6fd6a0 0 1px,transparent 1px 2px); }
.arrow { position:absolute; }
.a1 { left:111px; top:311px; width:20px; height:28px; }
.a2 { left:804px; top:342px; width:30px; height:32px; }
```
